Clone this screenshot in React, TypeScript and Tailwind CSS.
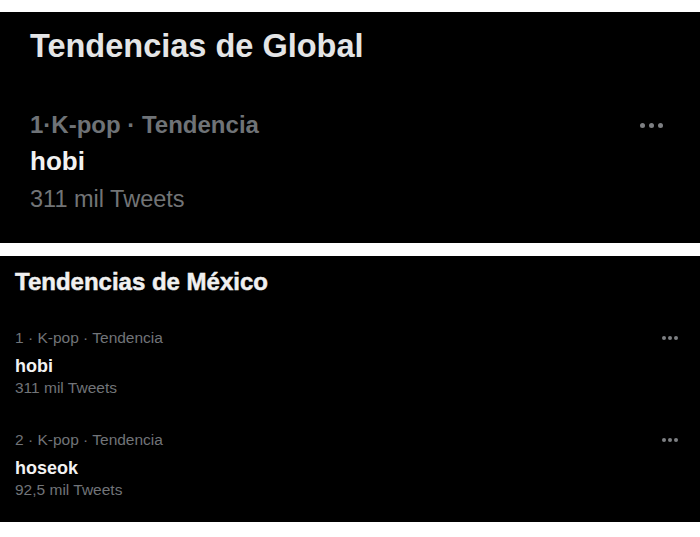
// Dos tarjetas de tendencias (estilo Twitter oscuro) sobre fondo blanco

const Dots = ({ size, gap }: { size: string; gap: string }) => (
  <div className={`flex items-center ${gap}`} aria-hidden="true">
    <span className={`${size} rounded-full bg-[#7d7f82]`} />
    <span className={`${size} rounded-full bg-[#7d7f82]`} />
    <span className={`${size} rounded-full bg-[#7d7f82]`} />
  </div>
);

const mexico = [
  { rank: 1, name: "hobi", tweets: "311 mil Tweets" },
  { rank: 2, name: "hoseok", tweets: "92,5 mil Tweets" },
];

export default function App() {
  return (
    <div
      className="w-[700px] h-[537px] bg-white pt-[12px]"
      style={{ fontFamily: '"Liberation Sans", Arial, sans-serif' }}
    >
      {/* Tarjeta grande: Global */}
      <section className="h-[231px] bg-black pl-[30px] pr-[37px] pt-[14px]">
        <h2 className="text-[32.5px] leading-[40px] font-bold text-[#e4e5e6]">
          Tendencias de Global
        </h2>
        <div className="mt-[45px] flex items-center justify-between">
          <p className="text-[24px] leading-[28px] font-bold text-[#6f7377]">
            1·K-pop · Tendencia
          </p>
          <Dots size="w-[5px] h-[5px]" gap="gap-[4px]" />
        </div>
        <p className="mt-[6px] text-[26px] leading-[32px] font-bold text-[#f2f2f2]">
          hobi
        </p>
        <p className="mt-[8px] text-[23.5px] leading-[28px] text-[#727476]">
          311 mil Tweets
        </p>
      </section>

      {/* Tarjeta compacta: México */}
      <section className="mt-[13px] h-[266px] bg-black pl-[15px] pr-[22px] pt-[12px]">
        <h2 className="text-[24px] leading-[28px] font-bold text-[#f0f0f0] [-webkit-text-stroke:0.5px_#f0f0f0]">
          Tendencias de México
        </h2>
        <div className="mt-[32px] flex flex-col gap-[32px]">
          {mexico.map((t) => (
            <div key={t.rank}>
              <div className="flex items-center justify-between">
                <p className="text-[15.5px] leading-[20px] text-[#717478]">
                  {t.rank} · K-pop · Tendencia
                </p>
                <Dots size="w-[4px] h-[4px]" gap="gap-[2px]" />
              </div>
              <p className="mt-[7px] text-[18px] leading-[22px] font-bold text-[#f2f2f2]">
                {t.name}
              </p>
              <p className="mt-[1px] text-[15.5px] leading-[20px] text-[#717478]">
                {t.tweets}
              </p>
            </div>
          ))}
        </div>
      </section>
    </div>
  );
}
